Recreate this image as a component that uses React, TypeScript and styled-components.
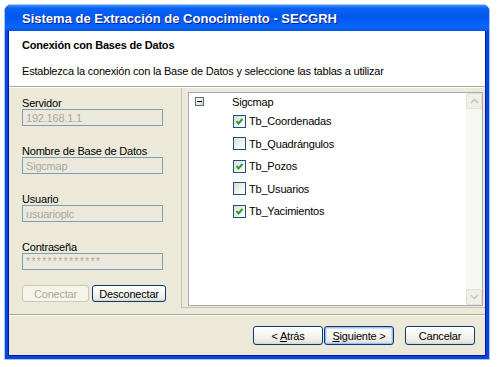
import styled, { createGlobalStyle } from "styled-components";

const GlobalStyle = createGlobalStyle`
  html, body {
    margin: 0;
    padding: 0;
    background: #ffffff;
  }
  body {
    font-family: "Liberation Sans", Arial, sans-serif;
    font-size: 11px;
    letter-spacing: -0.2px;
    color: #000;
  }
`;

const Screen = styled.div`
  width: 500px;
  height: 367px;
  box-sizing: border-box;
  padding: 4px 0 0 4px;
`;

const Window = styled.div`
  width: 486px;
  height: 356px;
  box-sizing: border-box;
  border: 1px solid #a9c6f3;
  border-radius: 7px 7px 0 0;
  overflow: hidden;
  display: flex;
  flex-direction: column;
  background: #0a3fd9;
`;

const TitleBar = styled.div`
  height: 26px;
  flex: none;
  display: flex;
  align-items: center;
  padding-left: 17px;
  background: linear-gradient(
    to bottom,
    #3d95ff 0%,
    #0a62f4 12%,
    #0058ee 45%,
    #0a66fb 85%,
    #0553e6 100%
  );
  color: #fff;
  font-size: 13px;
  font-weight: bold;
  text-shadow: 1px 1px 0 #0f1b89;
  letter-spacing: 0;
`;

const Frame = styled.div`
  flex: 1;
  display: flex;
  border: 3px solid #0b44dd;
  border-top: none;
`;

const Content = styled.div`
  flex: 1;
  display: flex;
  flex-direction: column;
  background: #ece9d8;
  border: 1px solid #0019a6;
  border-top: none;
`;

const Header = styled.div`
  height: 55px;
  box-sizing: border-box;
  background: #fff;
  padding: 8px 13px 0;
`;

const HeaderTitle = styled.div`
  font-weight: bold;
  line-height: 13px;
`;

const HeaderText = styled.div`
  margin-top: 13px;
  line-height: 13px;
`;

const Rule = styled.div`
  height: 0;
  border-top: 1px solid #aca899;
  border-bottom: 1px solid #ffffff;
`;

const Body = styled.div`
  display: flex;
  height: 226px;
`;

const LeftPanel = styled.div`
  width: 172px;
  flex: none;
  box-sizing: border-box;
  padding: 9px 0 0 13px;
  display: flex;
  flex-direction: column;
  gap: 19px;
`;

const FieldGroup = styled.div`
  display: flex;
  flex-direction: column;
`;

const Label = styled.label`
  line-height: 12px;
`;

const Field = styled.input`
  width: 141px;
  height: 17px;
  box-sizing: border-box;
  margin: 0;
  border: 1px solid #7f9db9;
  background: #ebe9de;
  color: #aca899;
  font-family: inherit;
  font-size: 11px;
  letter-spacing: -0.2px;
  padding: 0 3px;
  outline: none;
`;

const PasswordField = styled(Field)`
  letter-spacing: 1.5px;
  font-size: 10px;
`;

const ButtonRow = styled.div`
  display: flex;
  gap: 3px;
  margin-top: -4px;
`;

const Button = styled.button<{ $w: number; $h?: number; $primary?: boolean }>`
  width: ${(p) => p.$w}px;
  height: ${(p) => p.$h ?? 19}px;
  box-sizing: border-box;
  margin: 0;
  padding: 0;
  border: 1px solid #003c74;
  border-radius: 3px;
  background: linear-gradient(
    to bottom,
    #ffffff 0%,
    #f6f6f3 45%,
    #ebe9e1 85%,
    #d8d4c8 100%
  );
  font-family: inherit;
  font-size: 11px;
  letter-spacing: -0.2px;
  color: #000;
  box-shadow: ${(p) =>
    p.$primary ? "inset 0 0 0 1px #9fbdf2, inset 0 0 0 2px #cfdcf6" : "none"};

  &:disabled {
    border-color: #c9c7ba;
    background: #f5f4ea;
    color: #aca899;
  }
`;

const RightPanel = styled.div`
  flex: 1;
  display: flex;
  box-sizing: border-box;
  height: 220px;
  border-left: 1px solid #c6c3b3;
  border-bottom: 1px solid #c6c3b3;
  padding: 4px 2px 1px 6px;
`;

const TreeBox = styled.div`
  flex: 1;
  display: flex;
  background: #fff;
  border: 1px solid #a5acb5;
`;

const TreeList = styled.div`
  flex: 1;
  display: flex;
  flex-direction: column;
  padding-left: 6px;
`;

const RootRow = styled.div`
  height: 17px;
  display: flex;
  align-items: center;
`;

const Expander = styled.span`
  width: 9px;
  height: 9px;
  box-sizing: border-box;
  border: 1px solid #5e6b7c;
  background: linear-gradient(135deg, #ffffff 0%, #d4d4cc 100%);
  display: flex;
  align-items: center;
  justify-content: center;
  margin-right: 28px;

  &::after {
    content: "";
    width: 5px;
    height: 1px;
    background: #000;
  }
`;

const ChildRow = styled.div`
  height: 22.5px;
  display: flex;
  align-items: center;
  padding-left: 38px;
  gap: 3px;
`;

const CheckBox = styled.span`
  width: 13px;
  height: 13px;
  box-sizing: border-box;
  border: 1px solid #1c5180;
  background: linear-gradient(135deg, #dcdcd6 0%, #ffffff 90%);
  display: flex;
  align-items: center;
  justify-content: center;
`;

const ScrollBar = styled.div`
  width: 16px;
  flex: none;
  display: flex;
  flex-direction: column;
  justify-content: space-between;
  background: #f7f7f2;
`;

const ScrollButton = styled.div`
  height: 16px;
  box-sizing: border-box;
  border: 1px solid #e3e2d8;
  border-radius: 2px;
  background: #f1f0e8;
  display: flex;
  align-items: center;
  justify-content: center;
`;

const Footer = styled.div`
  flex: 1;
  display: flex;
  justify-content: flex-end;
  align-items: flex-start;
  padding: 10px 10px 0 0;
`;

const NavGroup = styled.div`
  display: flex;
  gap: 1px;
  margin-right: 11px;
`;

const Check = () => (
  <svg width="9" height="9" viewBox="0 0 9 9">
    <polyline
      points="1.5,4 3.5,6.5 7.5,2"
      fill="none"
      stroke="#21a121"
      strokeWidth="2"
    />
  </svg>
);

const Chevron = ({ up }: { up: boolean }) => (
  <svg width="9" height="6" viewBox="0 0 9 6">
    <polyline
      points={up ? "1,5 4.5,1.5 8,5" : "1,1 4.5,4.5 8,1"}
      fill="none"
      stroke="#c9c7ba"
      strokeWidth="1.6"
    />
  </svg>
);

const tables = [
  { name: "Tb_Coordenadas", on: true },
  { name: "Tb_Quadrángulos", on: false },
  { name: "Tb_Pozos", on: true },
  { name: "Tb_Usuarios", on: false },
  { name: "Tb_Yacimientos", on: true },
];

export default function App() {
  return (
    <Screen>
      <GlobalStyle />
      <Window>
        <TitleBar>Sistema de Extracción de Conocimiento - SECGRH</TitleBar>
        <Frame>
          <Content>
            <Header>
              <HeaderTitle>Conexión con Bases de Datos</HeaderTitle>
              <HeaderText>
                Establezca la conexión con la Base de Datos y seleccione las
                tablas a utilizar
              </HeaderText>
            </Header>
            <Rule />
            <Body>
              <LeftPanel>
                <FieldGroup>
                  <Label>Servidor</Label>
                  <Field readOnly value="192.168.1.1" />
                </FieldGroup>
                <FieldGroup>
                  <Label>Nombre de Base de Datos</Label>
                  <Field readOnly value="Sigcmap" />
                </FieldGroup>
                <FieldGroup>
                  <Label>Usuario</Label>
                  <Field readOnly value="usuarioplc" />
                </FieldGroup>
                <FieldGroup>
                  <Label>Contraseña</Label>
                  <PasswordField readOnly value="**************" />
                </FieldGroup>
                <ButtonRow>
                  <Button $w={67} $h={17} disabled>
                    Conectar
                  </Button>
                  <Button $w={74} $h={17}>
                    Desconectar
                  </Button>
                </ButtonRow>
              </LeftPanel>
              <RightPanel>
                <TreeBox>
                  <TreeList>
                    <RootRow>
                      <Expander />
                      Sigcmap
                    </RootRow>
                    {tables.map((t) => (
                      <ChildRow key={t.name}>
                        <CheckBox>{t.on && <Check />}</CheckBox>
                        {t.name}
                      </ChildRow>
                    ))}
                  </TreeList>
                  <ScrollBar>
                    <ScrollButton>
                      <Chevron up />
                    </ScrollButton>
                    <ScrollButton>
                      <Chevron up={false} />
                    </ScrollButton>
                  </ScrollBar>
                </TreeBox>
              </RightPanel>
            </Body>
            <Rule />
            <Footer>
              <NavGroup>
                <Button $w={70}>
                  &lt; <u>A</u>trás
                </Button>
                <Button $w={70} $primary>
                  <u>S</u>iguiente &gt;
                </Button>
              </NavGroup>
              <Button $w={70}>Cancelar</Button>
            </Footer>
          </Content>
        </Frame>
      </Window>
    </Screen>
  );
}
